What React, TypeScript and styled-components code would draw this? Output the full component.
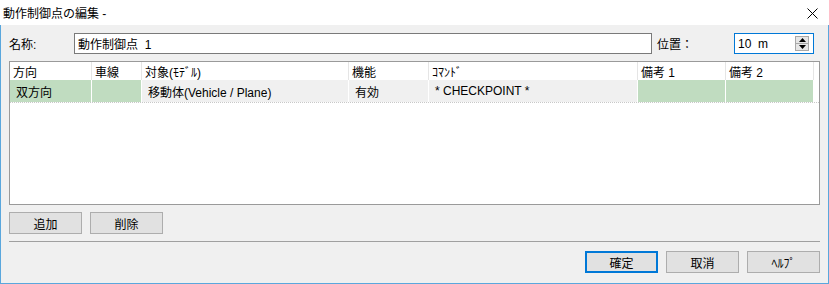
import React from "react";
import styled, { createGlobalStyle } from "styled-components";

const GlobalStyle = createGlobalStyle`
  html, body {
    margin: 0;
    padding: 0;
    background: #ffffff;
  }
  body {
    font-family: "Liberation Sans", "Noto Sans CJK JP", sans-serif;
    font-size: 12px;
    color: #000;
  }
  * {
    box-sizing: border-box;
  }
`;

const columns = [
  { key: "dir", title: "方向", width: 82 },
  { key: "lane", title: "車線", width: 50 },
  { key: "target", title: "対象(ﾓﾃﾞﾙ)", width: 207 },
  { key: "func", title: "機能", width: 80 },
  { key: "cmd", title: "ｺﾏﾝﾄﾞ", width: 209 },
  { key: "note1", title: "備考 1", width: 88 },
  { key: "note2", title: "備考 2", width: 88 },
];

const rows = [
  {
    dir: { text: "双方向", green: true },
    lane: { text: "", green: true },
    target: { text: "移動体(Vehicle / Plane)", green: false },
    func: { text: "有効", green: false },
    cmd: { text: "* CHECKPOINT *", green: false },
    note1: { text: "", green: true },
    note2: { text: "", green: true },
  },
];

const template = columns.map((c) => `${c.width}px`).join(" ") + " 1fr";

function App() {
  return (
    <>
      <GlobalStyle />
      <Window>
        <TitleBar>
          <TitleText>動作制御点の編集 -</TitleText>
          <CloseButton>
            <svg width="11" height="11" viewBox="0 0 11 11">
              <path d="M0.5 0.5 L10.5 10.5 M10.5 0.5 L0.5 10.5" stroke="#000" strokeWidth="1" fill="none" />
            </svg>
          </CloseButton>
        </TitleBar>
        <Body>
          <FieldRow>
            <Label $width={65}>名称:</Label>
            <TextBox>動作制御点&nbsp; 1</TextBox>
            <Label $width={82} $indent={5}>位置：</Label>
            <SpinBox>
              <SpinText>10&nbsp; m</SpinText>
              <SpinButtons>
                <SpinArrow>
                  <svg width="7" height="4" viewBox="0 0 7 4">
                    <path d="M0 4 L3.5 0 L7 4 Z" fill="#000" />
                  </svg>
                </SpinArrow>
                <SpinArrow>
                  <svg width="7" height="4" viewBox="0 0 7 4">
                    <path d="M0 0 L3.5 4 L7 0 Z" fill="#000" />
                  </svg>
                </SpinArrow>
              </SpinButtons>
            </SpinBox>
          </FieldRow>

          <Table>
            <HeaderRow>
              {columns.map((c) => (
                <HeaderCell key={c.key}>{c.title}</HeaderCell>
              ))}
              <HeaderCell />
            </HeaderRow>
            {rows.map((r, i) => (
              <DataRow key={i}>
                {columns.map((c) => {
                  const cell = r[c.key as keyof typeof r];
                  return (
                    <DataCell key={c.key} $green={cell.green}>
                      {cell.text}
                    </DataCell>
                  );
                })}
                <Filler />
              </DataRow>
            ))}
          </Table>

          <ButtonRow>
            <Button>追加</Button>
            <Button>削除</Button>
          </ButtonRow>

          <Separator />

          <Footer>
            <Button $focused>確定</Button>
            <Button>取消</Button>
            <Button>ﾍﾙﾌﾟ</Button>
          </Footer>
        </Body>
      </Window>
    </>
  );
}

const Window = styled.div`
  width: 829px;
  height: 284px;
  display: flex;
  flex-direction: column;
  background: #f0f0f0;
`;

const TitleBar = styled.div`
  height: 25px;
  background: #ffffff;
  display: flex;
  align-items: center;
  justify-content: space-between;
  padding: 0 11px 0 3px;
`;

const TitleText = styled.span`
  font-size: 12px;
  color: #000;
`;

const CloseButton = styled.div`
  display: flex;
  align-items: center;
  margin-top: 1px;
`;

const Body = styled.div`
  flex: 1;
  display: flex;
  flex-direction: column;
  border: 1px solid #5aa7dd;
  border-top: none;
  padding: 8px 8px 0 8px;
`;

const FieldRow = styled.div`
  display: flex;
  align-items: center;
  height: 21px;
`;

const Label = styled.span<{ $width: number; $indent?: number }>`
  width: ${(p) => p.$width}px;
  padding-left: ${(p) => p.$indent ?? 0}px;
  flex-shrink: 0;
`;

const TextBox = styled.div`
  width: 578px;
  height: 21px;
  background: #fff;
  border: 1px solid #7a7a7a;
  padding: 0 3px;
  display: flex;
  align-items: center;
`;

const SpinBox = styled.div`
  width: 80px;
  height: 21px;
  background: #fff;
  border: 1px solid #0078d7;
  display: flex;
  align-items: center;
  justify-content: space-between;
  padding: 0 4px 0 3px;
`;

const SpinText = styled.span``;

const SpinButtons = styled.div`
  width: 14px;
  height: 15px;
  display: flex;
  flex-direction: column;
  border: 1px solid #a8a8a8;
  background: #e6e6e6;
`;

const SpinArrow = styled.div`
  flex: 1;
  display: flex;
  align-items: center;
  justify-content: center;
  & + & {
    border-top: 1px solid #a8a8a8;
  }
`;

const Table = styled.div`
  margin-top: 7px;
  height: 144px;
  background: #fff;
  border: 1px solid #9a9a9a;
  display: flex;
  flex-direction: column;
`;

const HeaderRow = styled.div`
  display: grid;
  grid-template-columns: ${template};
  height: 18px;
  background: #fff;
`;

const HeaderCell = styled.div`
  padding: 0 3px;
  border-right: 1px solid #e5e5e5;
  white-space: nowrap;
  display: flex;
  align-items: center;
  &:last-child {
    border-right: none;
  }
`;

const DataRow = styled.div`
  display: grid;
  grid-template-columns: ${template};
  height: 23px;
  border-bottom: 1px dotted #c8c8c8;
`;

const DataCell = styled.div<{ $green: boolean }>`
  background: ${(p) => (p.$green ? "#c0dcc0" : "#f0f0f0")};
  border-right: 1px solid #fff;
  padding: 0 5px 0 6px;
  display: flex;
  align-items: center;
  white-space: nowrap;
`;

const Filler = styled.div`
  background: #fff;
`;

const ButtonRow = styled.div`
  margin-top: 7px;
  display: flex;
  gap: 8px;
`;

const Button = styled.div<{ $focused?: boolean }>`
  width: 73px;
  height: 22px;
  background: #e1e1e1;
  border: ${(p) => (p.$focused ? "2px solid #0078d7" : "1px solid #adadad")};
  display: flex;
  align-items: center;
  justify-content: center;
`;

const Separator = styled.div`
  margin-top: 7px;
  height: 1px;
  background: #a0a0a0;
`;

const Footer = styled.div`
  margin-top: 9px;
  display: flex;
  justify-content: flex-end;
  gap: 8px;
`;

export default App;
